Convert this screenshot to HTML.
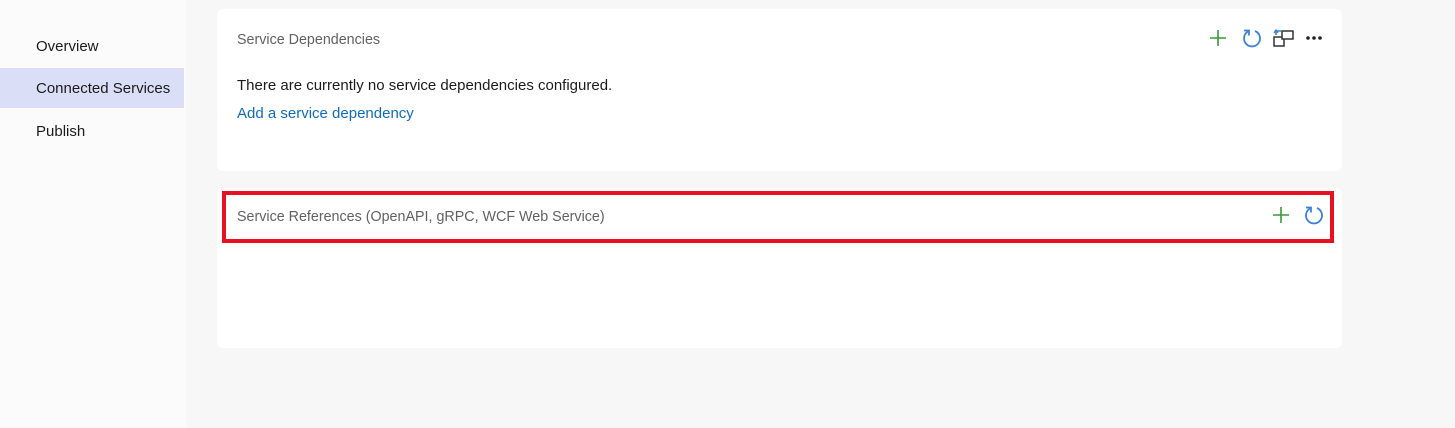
<!DOCTYPE html>
<html><head><meta charset="utf-8"><style>
body{margin:0;width:1455px;height:428px;background:#f7f7f7;font-family:"Segoe UI","Liberation Sans",sans-serif;position:relative;overflow:hidden}
.side{position:absolute;left:0;top:0;width:186px;height:428px;background:#fbfbfb}
.nav{position:absolute;left:36px;font-size:15px;color:#1b1b1b}
.hl{position:absolute;left:0;top:68px;width:184px;height:40px;background:#dadff7}
.card{position:absolute;left:217px;width:1125px;background:#fff;border-radius:6px}
.t{position:absolute;font-size:14.3px;color:#616161}
.red{position:absolute;left:222px;top:191px;width:1104px;height:44px;border:4px solid #e81123}
svg{position:absolute}
</style></head><body>
<div class="side"></div>
<div class="hl"></div>
<div class="nav" style="top:38px">Overview</div>
<div class="nav" style="top:80px">Connected Services</div>
<div class="nav" style="top:123px">Publish</div>

<div class="card" style="top:9px;height:162px"></div>
<div class="t" style="left:237px;top:32px">Service Dependencies</div>
<div style="position:absolute;left:237px;top:77px;font-size:15px;color:#1b1b1b">There are currently no service dependencies configured.</div>
<div style="position:absolute;left:237px;top:105px;font-size:15px;color:#0f6cbd">Add a service dependency</div>

<svg style="left:1209px;top:29px" width="18" height="18"><path d="M9 1v16M1 9h16" stroke="#3a9a3a" stroke-width="1.6"/></svg>
<svg style="left:1241px;top:27px" width="22" height="22"><path d="M7 4.5A8 8 0 1 0 14 4" fill="none" stroke="#3b82d6" stroke-width="1.8"/><path d="M3 3.5h5v5" fill="none" stroke="#3b82d6" stroke-width="1.8"/></svg>
<svg style="left:1273px;top:28px" width="22" height="20"><rect x="1" y="9" width="10" height="9" fill="none" stroke="#333" stroke-width="1.5"/><rect x="9" y="3" width="11" height="8" fill="#fff" stroke="#333" stroke-width="1.5"/><path d="M3 7V3h5" fill="none" stroke="#3b82d6" stroke-width="1.6"/><path d="M1 5l2-3 2 3" fill="none" stroke="#3b82d6" stroke-width="1.4"/></svg>
<svg style="left:1305px;top:35px" width="18" height="6"><circle cx="3" cy="3" r="1.8" fill="#222"/><circle cx="9" cy="3" r="1.8" fill="#222"/><circle cx="15" cy="3" r="1.8" fill="#222"/></svg>

<div class="card" style="top:188px;height:160px"></div>
<div class="red"></div>
<div class="t" style="left:237px;top:209px">Service References (OpenAPI, gRPC, WCF Web Service)</div>
<svg style="left:1272px;top:206px" width="18" height="18"><path d="M9 1v16M1 9h16" stroke="#3a9a3a" stroke-width="1.6"/></svg>
<svg style="left:1303px;top:204px" width="22" height="22"><path d="M7 4.5A8 8 0 1 0 14 4" fill="none" stroke="#3b82d6" stroke-width="1.8"/><path d="M3 3.5h5v5" fill="none" stroke="#3b82d6" stroke-width="1.8"/></svg>
</body></html>
